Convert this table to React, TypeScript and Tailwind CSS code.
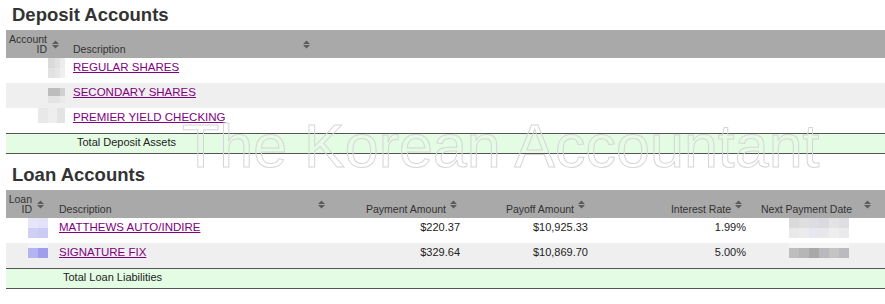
import React from "react";

type Cell = [number, string];
type PixRow = { h: number; cells: Cell[] };

function Pix({ rows }: { rows: PixRow[] }) {
  return (
    <div className="flex flex-col">
      {rows.map((r, i) => (
        <div key={i} className="flex" style={{ height: r.h }}>
          {r.cells.map(([w, c], j) => (
            <div key={j} style={{ width: w, background: c }} />
          ))}
        </div>
      ))}
    </div>
  );
}

function SortIcon() {
  return (
    <svg width="7" height="9" viewBox="0 0 7 9" className="shrink-0 self-center">
      <path d="M0 4 L3.5 0.5 L7 4 Z M0 5 L7 5 L3.5 8.5 Z" fill="#5c5c5c" />
    </svg>
  );
}

const depositRows: { name: string; pix: PixRow[] }[] = [
  {
    name: "REGULAR SHARES",
    pix: [
      { h: 10, cells: [[7, "#dadada"], [5, "#e2e2e2"], [5, "#ededed"]] },
      { h: 10, cells: [[7, "#e2e2e2"], [5, "#e6e6e6"], [5, "#efefef"]] },
    ],
  },
  {
    name: "SECONDARY SHARES",
    pix: [
      { h: 5, cells: [[17, "transparent"]] },
      { h: 8, cells: [[12, "#bdbdbd"], [5, "#d0d0d0"]] },
      { h: 7, cells: [[12, "#e4e4e4"], [5, "#eaeaea"]] },
    ],
  },
  {
    name: "PREMIER YIELD CHECKING",
    pix: [
      { h: 15, cells: [[10, "#e8e8e8"], [9, "#eeeeee"], [8, "#e3e3e3"]] },
    ],
  },
];

const loanRows: {
  name: string;
  pay: string;
  payoff: string;
  rate: string;
  pix: PixRow[];
  date: PixRow[];
}[] = [
  {
    name: "MATTHEWS AUTO/INDIRE",
    pay: "$220.37",
    payoff: "$10,925.33",
    rate: "1.99%",
    pix: [
      { h: 10, cells: [[10, "#e6e5fa"], [10, "#e2e2f9"]] },
      { h: 10, cells: [[10, "#d0d0f6"], [10, "#cbcbf5"]] },
    ],
    date: [
      {
        h: 10,
        cells: [
          [10, "#dadada"],
          [10, "#dfdfdf"],
          [10, "#dcdde3"],
          [10, "#d9d9de"],
          [10, "#e3e3e3"],
          [10, "#dddde3"],
        ],
      },
      {
        h: 10,
        cells: [
          [10, "#e9e9e9"],
          [10, "#ececec"],
          [10, "#e6e8ef"],
          [10, "#e8e8ea"],
          [10, "#eeeeee"],
          [10, "#eaeaed"],
        ],
      },
    ],
  },
  {
    name: "SIGNATURE FIX",
    pay: "$329.64",
    payoff: "$10,869.70",
    rate: "5.00%",
    pix: [
      { h: 5, cells: [[10, "#f2f2fa"], [10, "#f3f3fa"]] },
      { h: 10, cells: [[10, "#b4b4f1"], [10, "#9e9eec"]] },
    ],
    date: [
      { h: 5, cells: [[60, "#f4f4f4"]] },
      {
        h: 10,
        cells: [
          [10, "#bebebe"],
          [10, "#b6b6b6"],
          [10, "#a8a8a8"],
          [10, "#b9b9bd"],
          [10, "#c4c4c2"],
          [10, "#bbbbbf"],
        ],
      },
    ],
  },
];

export default function App() {
  return (
    <div className="relative min-h-[304px] w-full overflow-hidden bg-white pl-[6px] font-['Liberation_Sans',Arial,sans-serif] text-[#222]">
      <h2 className="h-[30px] pl-[6px] text-[18.5px] font-bold leading-[30px] text-[#333]">
        Deposit Accounts
      </h2>

      {/* Deposit table */}
      <div className="flex flex-col">
        <div className="grid h-[28px] grid-cols-[61px_251px_1fr] bg-[#a9a9a9] text-[10.5px] text-[#333]">
          <div className="flex items-end justify-end gap-[5px] pr-[8px]">
            <span className="pb-[4px] text-right leading-[10px]">
              Account
              <br />
              ID
            </span>
            <SortIcon />
          </div>
          <div className="flex items-end justify-between pl-[6px] pr-[8px]">
            <span className="pb-[4px] leading-[10px]">Description</span>
            <SortIcon />
          </div>
          <div />
        </div>
        {depositRows.map((r, i) => (
          <div
            key={r.name}
            className={
              "grid h-[25px] grid-cols-[61px_251px_1fr] " +
              (i % 2 === 1 ? "bg-[#efefef]" : "bg-white")
            }
          >
            <div className="flex items-start justify-end pr-[2px]">
              <Pix rows={r.pix} />
            </div>
            <div className="pl-[6px] pt-[2px] text-[11.5px] leading-[14px]">
              <a href="#" className="text-[#800080] underline">
                {r.name}
              </a>
            </div>
            <div />
          </div>
        ))}
        <div className="grid h-[21px] grid-cols-[61px_251px_1fr] border-y border-[#555] bg-[#e4fce4]">
          <div />
          <div className="pl-[10px] text-[11px] leading-[16px] text-[#222]">
            Total Deposit Assets
          </div>
          <div />
        </div>
      </div>

      <h2 className="mt-[6px] h-[30px] pl-[6px] text-[18.5px] font-bold leading-[30px] text-[#333]">
        Loan Accounts
      </h2>

      {/* Loan table */}
      <div className="flex flex-col">
        <div className="grid h-[28px] grid-cols-[47px_280px_133px_128px_158px_1fr] bg-[#a9a9a9] text-[10.5px] text-[#333]">
          <div className="flex items-end justify-end gap-[5px] pr-[9px]">
            <span className="pb-[4px] text-right leading-[10px]">
              Loan
              <br />
              ID
            </span>
            <SortIcon />
          </div>
          <div className="flex items-end justify-between pl-[6px] pr-[8px]">
            <span className="pb-[4px] leading-[10px]">Description</span>
            <SortIcon />
          </div>
          <div className="flex items-end justify-end gap-[4px] pr-[9px]">
            <span className="pb-[4px] leading-[10px]">Payment Amount</span>
            <SortIcon />
          </div>
          <div className="flex items-end justify-end gap-[4px] pr-[9px]">
            <span className="pb-[4px] leading-[10px]">Payoff Amount</span>
            <SortIcon />
          </div>
          <div className="flex items-end justify-end gap-[4px] pr-[10px]">
            <span className="pb-[4px] leading-[10px]">Interest Rate</span>
            <SortIcon />
          </div>
          <div className="flex items-end justify-between pl-[9px] pr-[14px]">
            <span className="pb-[4px] leading-[10px]">Next Payment Date</span>
            <SortIcon />
          </div>
        </div>
        {loanRows.map((r, i) => (
          <div
            key={r.name}
            className={
              "grid h-[25px] grid-cols-[47px_280px_133px_128px_158px_1fr] text-[11px] leading-[14px] " +
              (i % 2 === 1 ? "bg-[#efefef]" : "bg-white")
            }
          >
            <div className="flex items-start justify-end pr-[5px]">
              <Pix rows={r.pix} />
            </div>
            <div className="pl-[6px] pt-[2px] text-[11.5px]">
              <a href="#" className="text-[#800080] underline">
                {r.name}
              </a>
            </div>
            <div className="pr-[6px] pt-[2px] text-right">{r.pay}</div>
            <div className="pr-[6px] pt-[2px] text-right">{r.payoff}</div>
            <div className="pr-[6px] pt-[2px] text-right">{r.rate}</div>
            <div className="flex items-start justify-center">
              <Pix rows={r.date} />
            </div>
          </div>
        ))}
        <div className="grid h-[21px] grid-cols-[47px_280px_1fr] border-y border-[#555] bg-[#e4fce4]">
          <div />
          <div className="pl-[10px] text-[11px] leading-[16px] text-[#222]">
            Total Loan Liabilities
          </div>
          <div />
        </div>
      </div>

      {/* Watermark */}
      <div className="pointer-events-none absolute left-[182px] top-[124px] whitespace-nowrap text-[61px] leading-[44px] text-transparent [-webkit-text-stroke:1px_#d6d6d6]">
        The Korean Accountant
      </div>
    </div>
  );
}
